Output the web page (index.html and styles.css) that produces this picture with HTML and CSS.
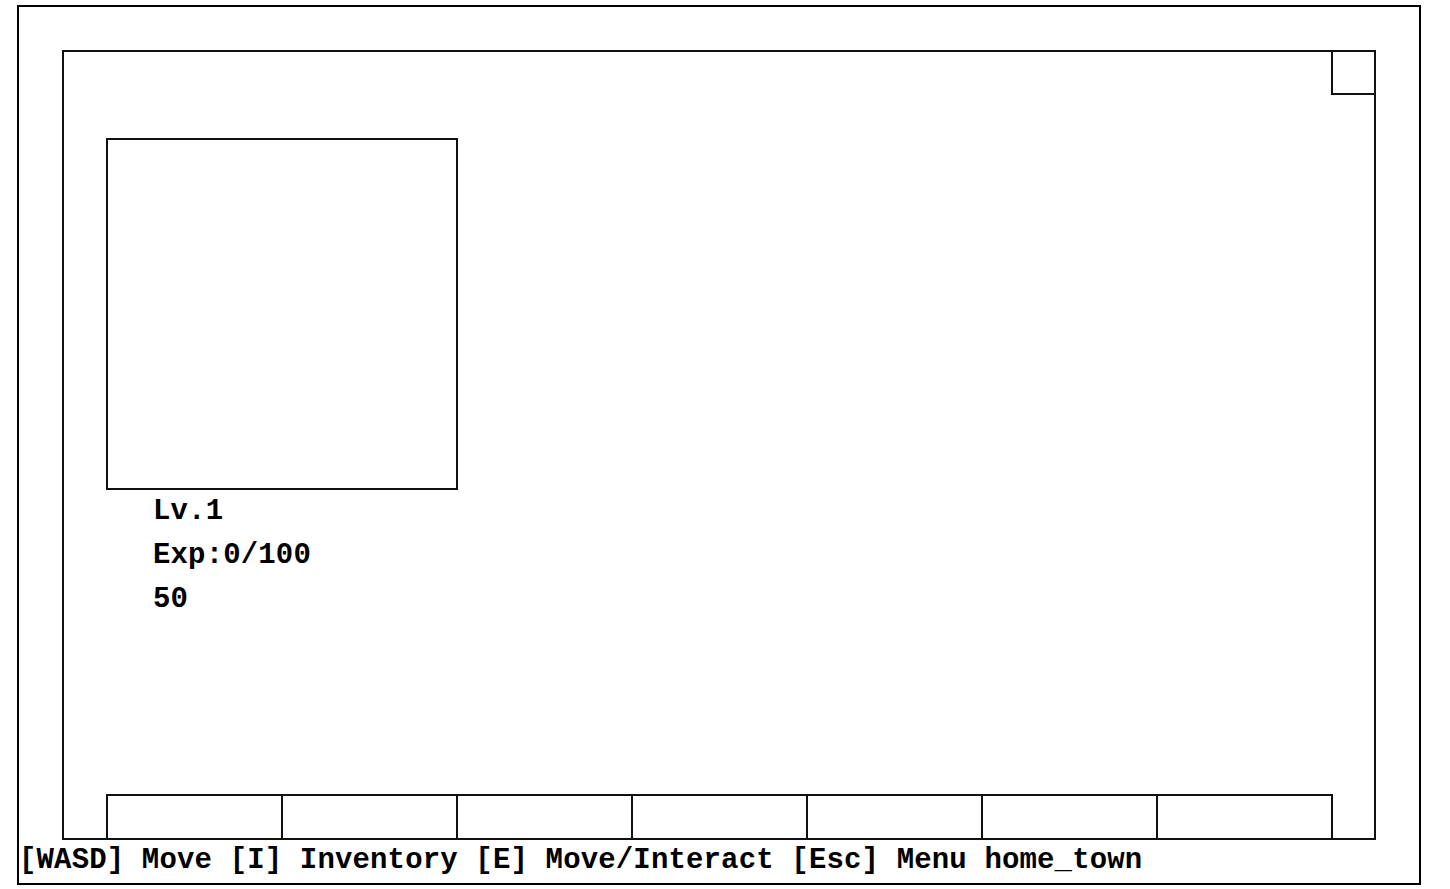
FILE: index.html
```html
<!DOCTYPE html>
<html lang="en">
<head>
    <meta charset="UTF-8">
    <meta name="viewport" content="width=device-width, initial-scale=1.0">
    <title>home_town</title>
    <link rel="stylesheet" href="styles.css">
</head>
<body>
    <div class="screen">
        <div class="world">
            <div class="minimap"></div>
            <div class="portrait"></div>
            <div class="stats">
                <div>Lv.1</div>
                <div>Exp:0/100</div>
                <div>50</div>
            </div>
            <div class="hotbar">
                <div class="slot"></div>
                <div class="slot"></div>
                <div class="slot"></div>
                <div class="slot"></div>
                <div class="slot"></div>
                <div class="slot"></div>
                <div class="slot"></div>
            </div>
        </div>
        <div class="status">[WASD] Move [I] Inventory [E] Move/Interact [Esc] Menu home_town</div>
    </div>
</body>
</html>
```

FILE: styles.css
```css
* {
    box-sizing: border-box;
}

body {
    margin: 0;
    padding: 0;
    background: #fff;
    color: #000;
    font-family: "Liberation Mono", "DejaVu Sans Mono", monospace;
    font-weight: bold;
    font-size: 29px;
    letter-spacing: 0.15px;
}

.screen {
    margin: 5px 0 0 17px;
    width: 1404px;
    height: 880px;
    border: 2px solid #000;
    display: flex;
    flex-direction: column;
}

.world {
    position: relative;
    margin: 43px 0 0 43px;
    width: 1314px;
    height: 790px;
    border: 2px solid #111;
    padding: 86px 0 0 42px;
    display: flex;
    flex-direction: column;
    align-items: flex-start;
}

.minimap {
    position: absolute;
    top: 0;
    right: 0;
    width: 43px;
    height: 43px;
    border-left: 2px solid #111;
    border-bottom: 2px solid #111;
}

.portrait {
    width: 352px;
    height: 352px;
    border: 2px solid #111;
}

.stats {
    padding-left: 47px;
    line-height: 44px;
}

.hotbar {
    margin-top: auto;
    display: flex;
    width: 1227px;
    height: 44px;
    border-top: 2px solid #111;
    border-right: 2px solid #111;
}

.slot {
    flex: 1;
    border-left: 2px solid #111;
}

.status {
    padding-top: 3px;
    line-height: 36px;
    white-space: nowrap;
}
```
